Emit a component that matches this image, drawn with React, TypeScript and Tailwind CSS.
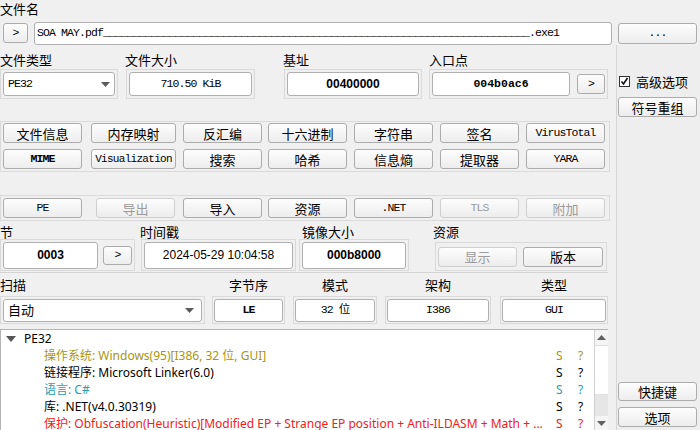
import React from 'react';

const MONO = "font-['Liberation_Mono','Noto_Sans_CJK_SC',monospace] text-[11.5px] tracking-[-0.9px]";

function Btn({
  children,
  className = '',
  disabled = false,
}: {
  children: React.ReactNode;
  className?: string;
  disabled?: boolean;
}) {
  return (
    <div
      className={`flex items-center justify-center rounded-[3px] border leading-none bg-linear-to-b from-[#fdfdfd] to-[#ededed] ${
        disabled ? 'border-[#cfcfcf] text-[#9b9b9b]' : 'border-[#acacac] text-black'
      } ${className}`}
    >
      {children}
    </div>
  );
}

function Field({ children, className = '' }: { children: React.ReactNode; className?: string }) {
  return (
    <div className={`flex items-center justify-center bg-white border border-[#b0b0b0] rounded-[3px] ${className}`}>
      {children}
    </div>
  );
}

function Frame({ children, className = '' }: { children: React.ReactNode; className?: string }) {
  return <div className={`border border-[#dadada] flex items-center ${className}`}>{children}</div>;
}

function Caret() {
  return (
    <svg width="9" height="5" viewBox="0 0 9 5" className="shrink-0">
      <path d="M0 0h9L4.5 5z" fill="#5a5a5a" />
    </svg>
  );
}

const TREE = [
  { label: '操作系统', value: 'Windows(95)[I386, 32 位, GUI]', color: 'text-[#a8950f]' },
  { label: '链接程序', value: 'Microsoft Linker(6.0)', color: 'text-black' },
  { label: '语言', value: 'C#', color: 'text-[#2a9db0]' },
  { label: '库', value: '.NET(v4.0.30319)', color: 'text-black' },
  {
    label: '保护',
    value: 'Obfuscation(Heuristic)[Modified EP + Strange EP position + Anti-ILDASM + Math + Calls]',
    color: 'text-[#f02020]',
  },
];

export default function App() {
  return (
    <div className="w-[700px] h-[430px] bg-[#f0f0f0] overflow-hidden flex flex-col font-['Noto_Sans_CJK_SC',sans-serif] text-[13px] text-black select-none">
      {/* 文件名 */}
      <div className="h-[20px] leading-[17px]">文件名</div>
      <div className="flex items-center h-[24px] mt-[1px]">
        <Btn className={`ml-[3px] w-[25px] h-[20px] ${MONO}`}>&gt;</Btn>
        <Field className={`ml-[6px] w-[578px] h-[23px] !justify-start pl-[2px] ${MONO}`}>
          <span className="whitespace-pre">
            SOA MAY.pdf{'_'.repeat(71)}.exe1
          </span>
        </Field>
        <Btn className={`ml-[6px] w-[79px] h-[21px] text-[#555] ${MONO}`}>...</Btn>
      </div>

      <div className="flex flex-1 min-h-0">
        {/* main column */}
        <div className="w-[610px] flex flex-col">
          {/* labels A */}
          <div className="flex mt-[7px] h-[15px] leading-[15px]">
            <div className="w-[125px]">文件类型</div>
            <div className="w-[158px]">文件大小</div>
            <div className="w-[146px]">基址</div>
            <div>入口点</div>
          </div>
          {/* frames A */}
          <div className="flex mt-[2px] h-[30px]">
            <Frame className="w-[118px] px-[2px]">
              <Field className={`w-[112px] h-[24px] !justify-between px-[4px] ${MONO}`}>
                <span>PE32</span>
                <Caret />
              </Field>
            </Frame>
            <Frame className="ml-[8px] w-[129px] px-[2px]">
              <Field className={`w-[123px] h-[24px] ${MONO}`}>710.50 KiB</Field>
            </Frame>
            <Frame className="ml-[29px] w-[138px] px-[2px]">
              <Field className="w-[132px] h-[24px] font-['Liberation_Sans',sans-serif] font-bold text-[12px]">
                00400000
              </Field>
            </Frame>
            <Frame className="ml-[7px] w-[179px] px-[2px]">
              <Field className="w-[138px] h-[24px] font-['Liberation_Mono',monospace] font-bold text-[11.5px]">
                004b0ac6
              </Field>
              <Btn className={`ml-[7px] w-[28px] h-[20px] ${MONO}`}>&gt;</Btn>
            </Frame>
          </div>

          {/* button group 1 */}
          <div className="mt-[22px] border border-[#dadada] h-[51px] pl-[2px] pt-[1px] flex flex-col gap-[6px]">
            <div className="flex h-[20px]">
              <Btn className="w-[79px]">文件信息</Btn>
              <Btn className="ml-[9px] w-[85px]">内存映射</Btn>
              <Btn className="ml-[7px] w-[79px]">反汇编</Btn>
              <Btn className="ml-[6px] w-[79px]">十六进制</Btn>
              <Btn className="ml-[7px] w-[79px]">字符串</Btn>
              <Btn className="ml-[7px] w-[79px]">签名</Btn>
              <Btn className={`ml-[7px] w-[79px] ${MONO}`}>VirusTotal</Btn>
            </div>
            <div className="flex h-[20px]">
              <Btn className={`w-[79px] ${MONO} font-bold`}>MIME</Btn>
              <Btn className="ml-[9px] w-[85px] font-['Liberation_Mono',monospace] text-[11px] tracking-[-0.7px]">
                Visualization
              </Btn>
              <Btn className="ml-[7px] w-[79px]">搜索</Btn>
              <Btn className="ml-[6px] w-[79px]">哈希</Btn>
              <Btn className="ml-[7px] w-[79px]">信息熵</Btn>
              <Btn className="ml-[7px] w-[79px]">提取器</Btn>
              <Btn className={`ml-[7px] w-[79px] ${MONO}`}>YARA</Btn>
            </div>
          </div>

          {/* button group 2 */}
          <div className="mt-[23px] border border-[#dadada] h-[26px] pl-[2px] flex items-center">
            <Btn className={`w-[79px] h-[20px] ${MONO}`}>PE</Btn>
            <Btn disabled className="ml-[14px] w-[79px] h-[20px]">导出</Btn>
            <Btn className="ml-[8px] w-[79px] h-[20px]">导入</Btn>
            <Btn className="ml-[6px] w-[79px] h-[20px]">资源</Btn>
            <Btn className={`ml-[7px] w-[79px] h-[20px] ${MONO}`}>.NET</Btn>
            <Btn disabled className={`ml-[7px] w-[79px] h-[20px] ${MONO}`}>TLS</Btn>
            <Btn disabled className="ml-[7px] w-[79px] h-[20px]">附加</Btn>
          </div>

          {/* labels B */}
          <div className="flex mt-[3px] h-[15px] leading-[15px]">
            <div className="w-[140px]">节</div>
            <div className="w-[162px]">时间戳</div>
            <div className="w-[131px]">镜像大小</div>
            <div>资源</div>
          </div>
          {/* frames B */}
          <div className="flex mt-0 h-[32px]">
            <Frame className="w-[135px] px-[2px]">
              <Field className="w-[95px] h-[27px] font-['Liberation_Sans',sans-serif] font-bold text-[12px]">
                0003
              </Field>
              <Btn className={`ml-[5px] w-[29px] h-[19px] ${MONO}`}>&gt;</Btn>
            </Frame>
            <Frame className="ml-[6px] w-[155px] px-[2px]">
              <Field className="w-[149px] h-[27px] font-['Liberation_Sans',sans-serif] text-[12px]">
                2024-05-29 10:04:58
              </Field>
            </Frame>
            <Frame className="ml-[3px] w-[110px] px-[2px]">
              <Field className="w-[104px] h-[27px] font-['Liberation_Sans',sans-serif] font-bold text-[12px]">
                000b8000
              </Field>
            </Frame>
            <Frame className="ml-[26px] w-[172px] px-[2px] h-[29px] self-end">
              <Btn disabled className="w-[79px] h-[20px]">显示</Btn>
              <Btn className="ml-[6px] w-[80px] h-[20px]">版本</Btn>
            </Frame>
          </div>

          {/* separator */}
          <div className="mt-[1px] h-px w-[608px] bg-[#d4d4d4]" />

          {/* labels C */}
          <div className="flex mt-[4px] h-[15px] leading-[15px]">
            <div className="w-[212px]">扫描</div>
            <div className="w-[73px] text-center">字节序</div>
            <div className="ml-[8px] w-[84px] text-center">模式</div>
            <div className="ml-[8px] w-[106px] text-center">架构</div>
            <div className="ml-[9px] w-[108px] text-center">类型</div>
          </div>
          {/* frames C */}
          <div className="flex mt-[4px] h-[28px]">
            <Frame className="w-[205px] px-[2px]">
              <Field className="w-[199px] h-[23px] !justify-between pl-[4px] pr-[7px]">
                <span>自动</span>
                <Caret />
              </Field>
            </Frame>
            <Frame className="ml-[7px] w-[73px] px-[1px]">
              <Field className={`w-[69px] h-[23px] ${MONO} font-bold`}>LE</Field>
            </Frame>
            <Frame className="ml-[8px] w-[84px] px-[1px]">
              <Field className={`w-[80px] h-[23px] ${MONO}`}>32 位</Field>
            </Frame>
            <Frame className="ml-[8px] w-[106px] px-[1px]">
              <Field className={`w-[102px] h-[23px] ${MONO}`}>I386</Field>
            </Frame>
            <Frame className="ml-[9px] w-[108px] px-[1px]">
              <Field className={`w-[104px] h-[23px] ${MONO}`}>GUI</Field>
            </Frame>
          </div>

          {/* tree */}
          <div className="mt-[5px] w-[608px] flex-1 min-h-0 flex bg-white border-t border-l border-[#b4b4b4] overflow-hidden">
            <div className="flex-1 min-w-0 font-['Noto_Sans','Noto_Sans_CJK_SC',sans-serif] text-[12px]">
              <div className="h-[17px] flex items-center">
                <svg width="10" height="6" viewBox="0 0 10 6" className="ml-[5px]">
                  <path d="M0 0h10L5 6z" fill="#555" />
                </svg>
                <span className="ml-[8px] leading-none">PE32</span>
              </div>
              {TREE.map((r) => (
                <div key={r.label} className={`h-[17px] flex items-center ${r.color}`}>
                  <div className="ml-[43px] w-[504px] truncate leading-[17px]">
                    {r.label}: {r.value}
                  </div>
                  <span className="ml-[8px] w-[22px]">S</span>
                  <span>?</span>
                </div>
              ))}
            </div>
            {/* scrollbar */}
            <div className="w-[14px] border-l border-[#d0d0d0] bg-[#e6e6e6] flex flex-col">
              <div className="h-[15px] bg-[#f4f4f4] flex items-center justify-center">
                <svg width="9" height="5" viewBox="0 0 9 5">
                  <path d="M0 5h9L4.5 0z" fill="#606060" />
                </svg>
              </div>
              <div className="h-[50px] bg-white border-y border-[#e0e0e0]" />
              <div className="flex-1" />
              <div className="h-[14px] bg-[#f4f4f4] flex items-center justify-center">
                <svg width="9" height="5" viewBox="0 0 9 5">
                  <path d="M0 0h9L4.5 5z" fill="#606060" />
                </svg>
              </div>
            </div>
          </div>
        </div>

        {/* right column */}
        <div className="ml-[6px] w-[84px] border-l border-[#d6d6d6] bg-[#eeeeee] flex flex-col">
          <div className="mt-[29px] h-[14px] flex items-center">
            <div className="ml-[2px] w-[11px] h-[11px] bg-white border border-[#333] flex items-center justify-center">
              <svg width="9" height="9" viewBox="0 0 9 9">
                <path d="M1.5 4.5l2 2.5 4-6" stroke="#111" strokeWidth="1.6" fill="none" />
              </svg>
            </div>
            <span className="ml-[6px] leading-none">高级选项</span>
          </div>
          <Btn className="mt-[9px] ml-[1px] w-[79px] h-[20px]">符号重组</Btn>
          <div className="flex-1" />
          <Btn className="ml-[1px] w-[79px] h-[19px]">快捷键</Btn>
          <Btn className="mt-[6px] mb-[3px] ml-[1px] w-[79px] h-[20px]">选项</Btn>
        </div>
      </div>
    </div>
  );
}
